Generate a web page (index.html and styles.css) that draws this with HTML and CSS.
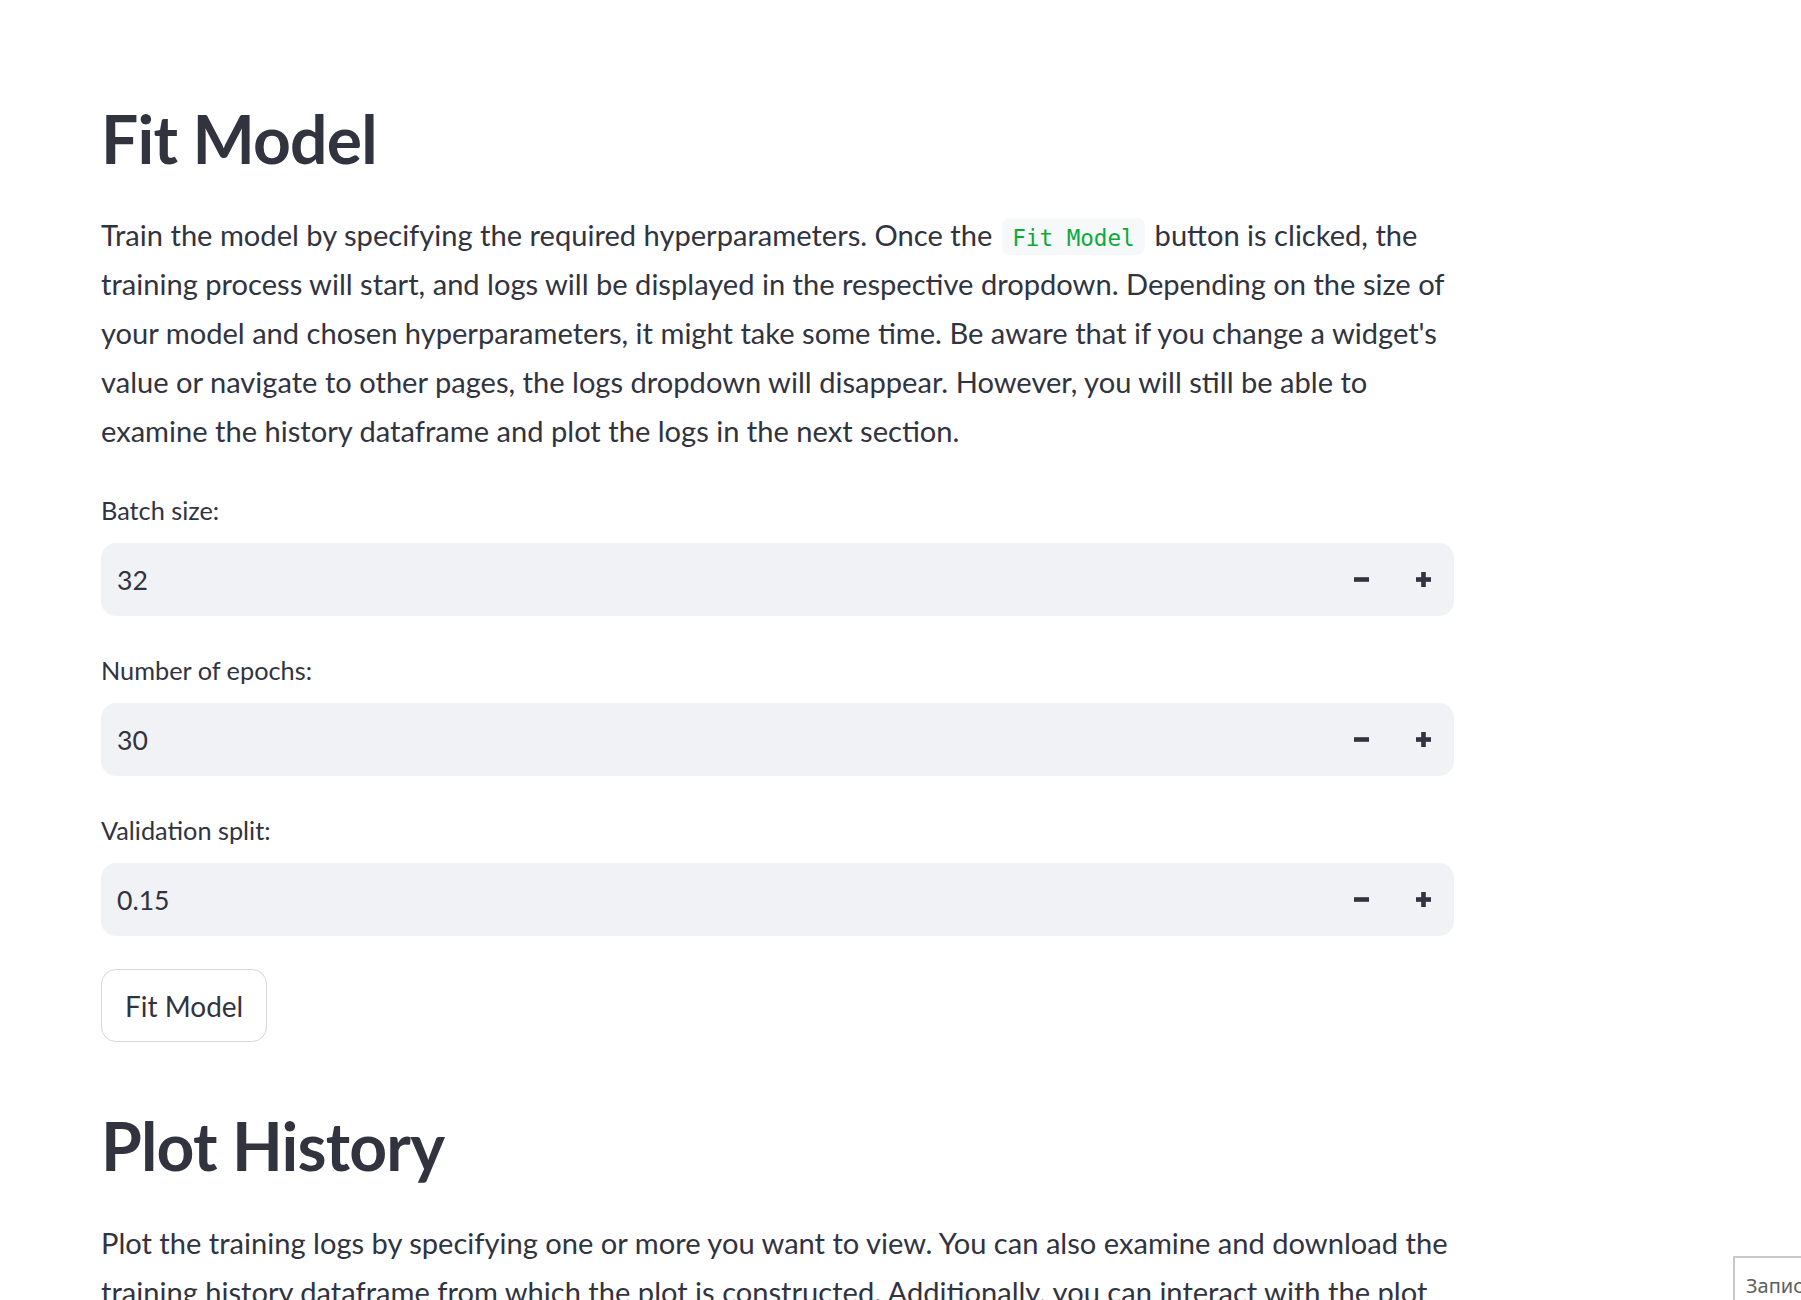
FILE: index.html
```html
<!DOCTYPE html>
<html lang="en">
<head>
<meta charset="utf-8">
<title>Fit Model</title>
<link rel="stylesheet" href="styles.css">
</head>
<body>
<main class="app-main">
  <div class="block-container">
    <h1 class="page-title">Fit Model</h1>
    <p class="text">Train the model by specifying the required hyperparameters. Once the <code class="inline-code">Fit Model</code> button is clicked, the training process will start, and logs will be displayed in the respective dropdown. Depending on the size of your model and chosen hyperparameters, it might take some time. Be aware that if you change a widget's value or navigate to other pages, the logs dropdown will disappear. However, you will still be able to examine the history dataframe and plot the logs in the next section.</p>

    <div class="form">
      <div class="field">
        <label class="field-label">Batch size:</label>
        <div class="number-input">
          <span class="number-value">32</span>
          <div class="steppers">
            <button class="step" type="button" aria-label="Decrement">
              <svg width="15" height="15" viewBox="0 0 15 15"><rect x="0" y="5.2" width="15" height="4.6" fill="#31333F"/></svg>
            </button>
            <button class="step" type="button" aria-label="Increment">
              <svg width="15" height="15" viewBox="0 0 15 15"><rect x="0" y="5.2" width="15" height="4.6" fill="#31333F"/><rect x="5.2" y="0" width="4.6" height="15" fill="#31333F"/></svg>
            </button>
          </div>
        </div>
      </div>
      <div class="field">
        <label class="field-label">Number of epochs:</label>
        <div class="number-input">
          <span class="number-value">30</span>
          <div class="steppers">
            <button class="step" type="button" aria-label="Decrement">
              <svg width="15" height="15" viewBox="0 0 15 15"><rect x="0" y="5.2" width="15" height="4.6" fill="#31333F"/></svg>
            </button>
            <button class="step" type="button" aria-label="Increment">
              <svg width="15" height="15" viewBox="0 0 15 15"><rect x="0" y="5.2" width="15" height="4.6" fill="#31333F"/><rect x="5.2" y="0" width="4.6" height="15" fill="#31333F"/></svg>
            </button>
          </div>
        </div>
      </div>
      <div class="field">
        <label class="field-label">Validation split:</label>
        <div class="number-input">
          <span class="number-value">0.15</span>
          <div class="steppers">
            <button class="step" type="button" aria-label="Decrement">
              <svg width="15" height="15" viewBox="0 0 15 15"><rect x="0" y="5.2" width="15" height="4.6" fill="#31333F"/></svg>
            </button>
            <button class="step" type="button" aria-label="Increment">
              <svg width="15" height="15" viewBox="0 0 15 15"><rect x="0" y="5.2" width="15" height="4.6" fill="#31333F"/><rect x="5.2" y="0" width="4.6" height="15" fill="#31333F"/></svg>
            </button>
          </div>
        </div>
      </div>
    </div>

    <div class="button-row">
      <button class="btn" type="button">Fit Model</button>
    </div>

    <h1 class="page-title section-title">Plot History</h1>
    <p class="text">Plot the training logs by specifying one or more you want to view. You can also examine and download the training history dataframe from which the plot is constructed. Additionally, you can interact with the plot by zooming in, panning and hovering over the points to see the exact values.</p>
  </div>
</main>

<div class="toast">Запись</div>
</body>
</html>
```
FILE: styles.css
```css
html, body {
  margin: 0;
  padding: 0;
  background: #ffffff;
}

body {
  font-family: "Lato", "Liberation Sans", sans-serif;
  color: #31333F;
}

.app-main {
  height: 100vh;
  overflow-y: auto;
  overflow-x: hidden;
  scrollbar-width: none;
}

.app-main::-webkit-scrollbar {
  display: none;
}

.block-container {
  width: 1353px;
  padding: 99px 0 120px 101px;
}

.page-title {
  margin: 0;
  font-size: 66px;
  line-height: 79px;
  font-weight: 700;
  letter-spacing: -0.8px;
  color: #31333F;
}

.section-title {
  margin-top: 64px;
}

.text {
  margin: 32px 0 0;
  font-size: 29.1px;
  line-height: 49px;
}

.section-title + .text {
  margin-top: 33px;
}

.inline-code {
  font-family: "DejaVu Sans Mono", monospace;
  font-size: 22.6px;
  line-height: 1;
  color: rgb(9, 171, 59);
  background: #F7F8FA;
  padding: 7px 10px 4px;
  margin: 0 2.5px;
  border-radius: 8px;
}

.form {
  display: flex;
  flex-direction: column;
  gap: 39px;
  margin-top: 40px;
}

.field {
  display: flex;
  flex-direction: column;
  gap: 18px;
}

.field-label {
  font-size: 25.3px;
  line-height: 30px;
  color: #31333F;
}

.number-input {
  display: flex;
  align-items: center;
  height: 73px;
  background: #F0F2F6;
  border-radius: 15px;
}

.number-value {
  flex: 1;
  padding-left: 16px;
  font-size: 26.6px;
  color: #31333F;
}

.steppers {
  display: flex;
  height: 100%;
}

.step {
  width: 62px;
  height: 100%;
  border: 0;
  padding: 0;
  background: transparent;
  display: flex;
  align-items: center;
  justify-content: center;
}

.step svg {
  display: block;
}

.button-row {
  display: flex;
  margin-top: 33px;
}

.btn {
  height: 73px;
  padding: 0 23px;
  font-family: "Lato", "Liberation Sans", sans-serif;
  font-size: 28px;
  color: #31333F;
  background: #ffffff;
  border: 1.5px solid #D6D6D9;
  border-radius: 15px;
}

.toast {
  position: fixed;
  right: -135px;
  bottom: -18px;
  width: 188px;
  height: 58px;
  padding: 0 0 0 11px;
  background: #ffffff;
  border: 2px solid #C9C9C9;
  font-family: "Noto Sans", "Open Sans", sans-serif;
  font-size: 20px;
  line-height: 56px;
  color: #5E5E5E;
  box-sizing: content-box;
}
```
